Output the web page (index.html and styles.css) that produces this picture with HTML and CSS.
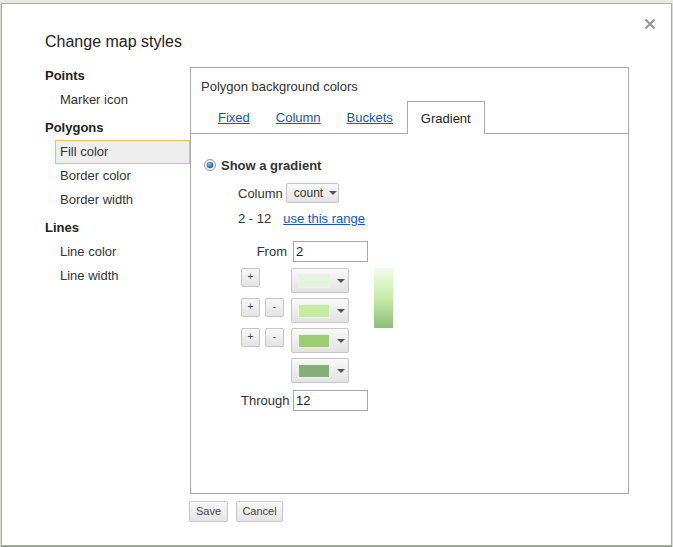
FILE: index.html
```html
<!DOCTYPE html>
<html>
<head>
<meta charset="utf-8">
<link rel="stylesheet" href="styles.css">
</head>
<body>
<div class="dialog">
  <svg class="close" width="12" height="12" viewBox="0 0 12 12"><path d="M1.5 1.5 L10.5 10.5 M10.5 1.5 L1.5 10.5" stroke="#9a9a9a" stroke-width="2.4" fill="none"/></svg>
  <div class="title">Change map styles</div>
  <div class="main">
    <div class="nav">
      <div class="group">Points</div>
      <div class="item">Marker icon</div>
      <div class="group gap">Polygons</div>
      <div class="item selected">Fill color</div>
      <div class="item">Border color</div>
      <div class="item">Border width</div>
      <div class="group gap">Lines</div>
      <div class="item">Line color</div>
      <div class="item">Line width</div>
    </div>
    <div class="right">
      <div class="panel">
        <div class="panel-title">Polygon background colors</div>
        <div class="tabs">
          <a class="tab">Fixed</a>
          <a class="tab">Column</a>
          <a class="tab">Buckets</a>
          <span class="tab active">Gradient</span>
        </div>
        <div class="content">
          <div class="radio-row">
            <svg class="radio" width="12" height="12" viewBox="0 0 12 12">
              <defs><radialGradient id="rg" cx="0.4" cy="0.35" r="0.7"><stop offset="0" stop-color="#7fc4f0"/><stop offset="1" stop-color="#0b5a9c"/></radialGradient></defs>
              <circle cx="6" cy="6" r="5.5" fill="#f2f2f2" stroke="#9a9a9a"/>
              <circle cx="6" cy="6" r="3.3" fill="url(#rg)"/>
            </svg>
            <span class="bold">Show a gradient</span>
          </div>
          <div class="col-row">
            <span>Column</span>
            <span class="select">count <i class="arrow"></i></span>
          </div>
          <div class="range-row">
            <span>2 - 12</span>
            <a class="link">use this range</a>
          </div>
          <div class="grid">
            <div class="label">From</div>
            <div class="field"><span class="input">2</span></div>

            <div class="btns"><span class="sbtn">+</span></div>
            <div class="dd"><span class="swatch" style="background:#e3f3df"></span><i class="arrow"></i></div>
            <div class="bar"></div>

            <div class="btns"><span class="sbtn">+</span><span class="sbtn">-</span></div>
            <div class="dd"><span class="swatch" style="background:#c6eca4"></span><i class="arrow"></i></div>

            <div class="btns"><span class="sbtn">+</span><span class="sbtn">-</span></div>
            <div class="dd"><span class="swatch" style="background:#9dcc74"></span><i class="arrow"></i></div>

            <div class="btns"></div>
            <div class="dd"><span class="swatch" style="background:#87ae79"></span><i class="arrow"></i></div>

            <div class="label through">Through</div>
            <div class="field"><span class="input">12</span></div>
          </div>
        </div>
      </div>
      <div class="footer">
        <span class="button save">Save</span>
        <span class="button cancel">Cancel</span>
      </div>
    </div>
  </div>
</div>
</body>
</html>
```
FILE: styles.css
```css
html, body {
  margin: 0;
  padding: 0;
}
body {
  width: 673px;
  height: 547px;
  background: #e9ebe0;
  font-family: "Liberation Sans", Arial, sans-serif;
  font-size: 13px;
  color: #333;
  overflow: hidden;
}
.dialog {
  position: relative;
  box-sizing: border-box;
  width: 671px;
  height: 543px;
  margin: 3px 0 0 1px;
  background: #fff;
  border: 1px solid #a8aca4;
  box-shadow: 0 1px 1px rgba(90, 100, 80, 0.6);
  padding: 28px 0 0 43px;
}
.close {
  position: absolute;
  top: 14px;
  right: 15px;
}
.title {
  font-size: 16px;
  line-height: 20px;
  color: #222;
}
.main {
  display: flex;
  margin-top: 11px;
}
.nav {
  width: 145px;
  flex: none;
  padding-top: 1px;
}
.group {
  font-weight: bold;
  line-height: 24px;
  color: #222;
}
.group.gap {
  margin-top: 4px;
}
.item {
  margin-left: 10px;
  padding-left: 4px;
  line-height: 22px;
  border: 1px solid transparent;
  color: #333;
}
.item.selected {
  background: #eeeeee;
  border-color: #eebd5e;
}
.right {
  display: flex;
  flex-direction: column;
  margin-top: 4px;
}
.panel {
  box-sizing: border-box;
  width: 439px;
  height: 427px;
  border: 1px solid #aaaaaa;
}
.panel-title {
  padding: 11px 0 0 10px;
  line-height: 16px;
  color: #333;
}
.tabs {
  display: flex;
  margin-top: 6px;
  padding-left: 14px;
  height: 32px;
  border-bottom: 1px solid #aaaaaa;
}
.tab {
  padding: 1px 13px 0;
  line-height: 32px;
  color: #1155cc;
  text-decoration: underline;
}
.tab.active {
  box-sizing: border-box;
  height: 33px;
  line-height: 31px;
  color: #222;
  text-decoration: none;
  background: #fff;
  border: 1px solid #aaaaaa;
  border-bottom: none;
  padding: 1px 13px 0 13px;
  margin-left: 1px;
}
.content {
  padding: 22px 0 0 13px;
}
.radio-row {
  display: flex;
  align-items: center;
  height: 18px;
  gap: 5px;
}
.radio {
  flex: none;
}
.bold {
  font-weight: bold;
  color: #333;
}
.col-row {
  display: flex;
  align-items: center;
  gap: 3px;
  margin: 9px 0 0 34px;
  height: 20px;
}
.select {
  box-sizing: border-box;
  display: inline-flex;
  align-items: center;
  height: 20px;
  width: 53px;
  padding-left: 7px;
  gap: 6px;
  font-size: 12px;
  border: 1px solid #c6c6c6;
  border-radius: 2px;
  background: linear-gradient(#f8f8f8, #e4e4e4);
  color: #333;
}
.arrow {
  display: inline-block;
  width: 0;
  height: 0;
  border-left: 4px solid transparent;
  border-right: 4px solid transparent;
  border-top: 4px solid #555;
}
.range-row {
  display: flex;
  align-items: center;
  height: 18px;
  margin: 6px 0 0 34px;
  gap: 12px;
}
.link {
  color: #1155cc;
  text-decoration: underline;
}
.grid {
  display: grid;
  grid-template-columns: 50px 58px 25px 19px;
  grid-template-rows: 22px 25px 25px 25px 27px 21px;
  row-gap: 5px;
  margin: 14px 0 0 37px;
}
.label {
  grid-column: 1;
  text-align: right;
  padding-right: 4px;
  line-height: 21px;
  color: #333;
  white-space: nowrap;
}
.through {
  padding-right: 4px;
}
.field {
  grid-column: 2 / span 3;
  padding-left: 2px;
}
.input {
  box-sizing: border-box;
  display: block;
  width: 75px;
  height: 21px;
  line-height: 19px;
  padding-left: 2px;
  border: 1px solid #a9a9a9;
  color: #222;
  font-size: 13px;
}
.btns {
  grid-column: 1;
  display: flex;
  gap: 5px;
  align-items: flex-start;
}
.sbtn {
  box-sizing: border-box;
  width: 19px;
  height: 19px;
  border: 1px solid #c6c6c6;
  border-radius: 2px;
  background: linear-gradient(#f8f8f8, #e3e3e3);
  font-size: 10px;
  line-height: 16px;
  text-align: center;
  color: #444;
}
.dd {
  grid-column: 2;
  box-sizing: border-box;
  height: 25px;
  border: 1px solid #c6c6c6;
  border-radius: 2px;
  background: linear-gradient(#f9f9f9, #e2e2e2);
  display: flex;
  align-items: center;
  padding-left: 6px;
  gap: 7px;
}
.swatch {
  box-sizing: border-box;
  width: 32px;
  height: 14px;
  border: 1px solid #eef0ea;
}
.bar {
  grid-column: 4;
  grid-row: 2 / span 3;
  height: 60px;
  background: linear-gradient(#f2fdec, #c8eca6 50%, #8fbe7a);
}
.footer {
  display: flex;
  gap: 8px;
  margin: 7px 0 0 -1px;
}
.button {
  box-sizing: border-box;
  height: 21px;
  line-height: 19px;
  font-size: 11px;
  text-align: center;
  color: #444;
  border: 1px solid #c6c6c6;
  border-radius: 2px;
  background: linear-gradient(#f8f8f8, #e4e4e4);
}
.save {
  width: 39px;
}
.cancel {
  width: 47px;
}
```
